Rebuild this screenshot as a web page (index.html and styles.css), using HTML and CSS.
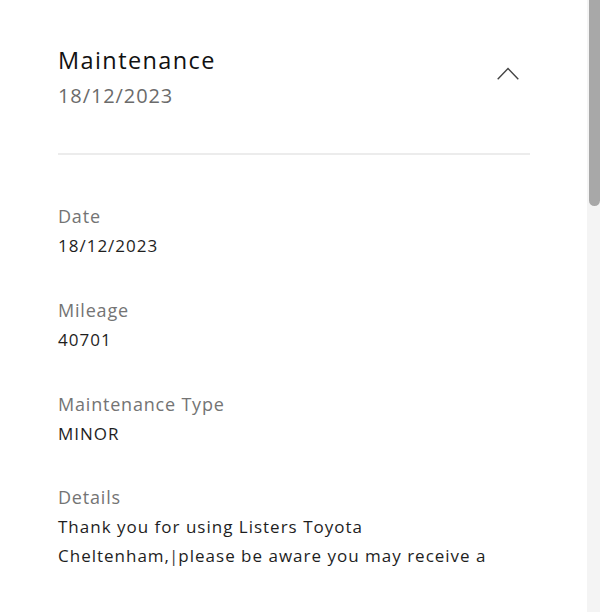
FILE: index.html
```html
<!DOCTYPE html>
<html lang="en">
<head>
    <meta charset="UTF-8">
    <meta name="viewport" content="width=device-width, initial-scale=1.0">
    <title>Maintenance</title>
    <link rel="stylesheet" href="styles.css">
</head>
<body>

    <div class="record">
        <div class="record-header">
            <div class="record-heading">
                <div class="record-title">Maintenance</div>
                <div class="record-date">18/12/2023</div>
            </div>
            <button class="toggle-button" aria-label="Collapse">
                <svg width="22" height="13" viewBox="0 0 22 13">
                    <path d="M0.7 12.3 L11 1.5 L21.3 12.3" fill="none" stroke="#444444" stroke-width="1.4"/>
                </svg>
            </button>
        </div>

        <div class="divider"></div>

        <div class="fields">
            <div class="field">
                <div class="field-label">Date</div>
                <div class="field-value">18/12/2023</div>
            </div>
            <div class="field">
                <div class="field-label">Mileage</div>
                <div class="field-value">40701</div>
            </div>
            <div class="field">
                <div class="field-label">Maintenance Type</div>
                <div class="field-value">MINOR</div>
            </div>
            <div class="field">
                <div class="field-label">Details</div>
                <div class="field-value">Thank you for using Listers Toyota<br>Cheltenham,<span class="caret">|</span>please be aware you may receive a</div>
            </div>
        </div>
    </div>

    <!-- scrollbar of the outer page, drawn over the content -->
    <div class="scrollbar">
        <div class="scrollbar-thumb"></div>
    </div>

</body>
</html>
```

FILE: styles.css
```css
body {
    margin: 0;
    font-family: "Open Sans", Lato, sans-serif;
    background-color: #ffffff;
    color: #1a1a1a;
}

.record {
    padding: 42px 70px 0 58px;
}

.record-header {
    display: flex;
    justify-content: space-between;
    align-items: flex-start;
    padding-bottom: 39px;
}

.record-title {
    font-size: 23.5px;
    line-height: 36px;
    letter-spacing: 1.4px;
    color: #111111;
}

.record-date {
    font-size: 20px;
    line-height: 36px;
    letter-spacing: 0.9px;
    color: #6b6b6b;
}

.toggle-button {
    background: transparent;
    border: none;
    padding: 0;
    margin: 25px 11px 0 0;
    cursor: pointer;
    display: flex;
}

.divider {
    height: 2px;
    background-color: #ececec;
}

.fields {
    display: flex;
    flex-direction: column;
    gap: 36px;
    padding-top: 47px;
}

.field:last-child {
    margin-top: -1px;
}

.field-label {
    font-size: 18px;
    line-height: 29px;
    letter-spacing: 0.8px;
    color: #747474;
}

.field-value {
    font-size: 17px;
    line-height: 29px;
    letter-spacing: 1px;
    color: #1e1e1e;
}

.caret {
    letter-spacing: 0;
    margin-left: -1px;
    color: #444444;
}

.scrollbar {
    position: fixed;
    top: 0;
    right: 0;
    width: 13px;
    height: 100%;
    background-color: #f4f4f4;
}

.scrollbar-thumb {
    margin-left: 2px;
    height: 206px;
    background-color: #a8a8a8;
    border-radius: 0 0 6px 6px;
}
```
